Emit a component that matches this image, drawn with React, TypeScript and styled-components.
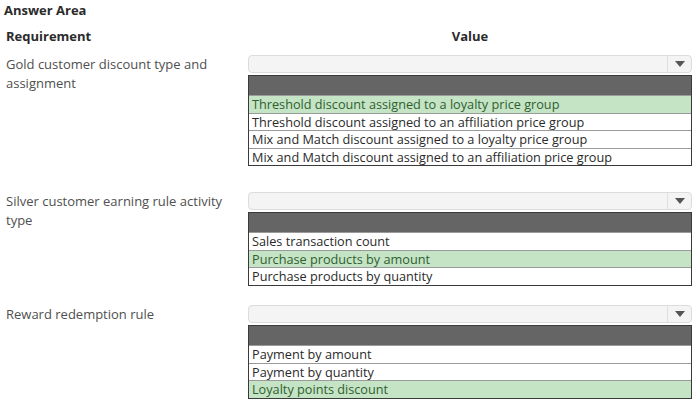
import styled, { createGlobalStyle } from "styled-components";

const GlobalStyle = createGlobalStyle`
  body {
    margin: 0;
    background: #ffffff;
    font-family: "Open Sans", "Liberation Sans", sans-serif;
  }
`;

const Page = styled.div`
  width: 700px;
  height: 408px;
  padding: 1px 0 0 4px;
  box-sizing: border-box;
  overflow: hidden;
`;

const Title = styled.div`
  font-weight: 700;
  font-size: 13px;
  line-height: 18px;
  color: #2b2b2b;
`;

const Grid = styled.div`
  display: grid;
  grid-template-columns: 244px 444px;
  margin-top: 8px;
`;

const HeadCell = styled.div<{ $center?: boolean }>`
  font-weight: 700;
  font-size: 13px;
  line-height: 18px;
  color: #2b2b2b;
  padding-left: ${(p) => (p.$center ? "0" : "2px")};
  text-align: ${(p) => (p.$center ? "center" : "left")};
  margin-bottom: 10px;
`;

const Label = styled.div<{ $gap: number }>`
  font-size: 13px;
  line-height: 19px;
  color: #4f4f4f;
  padding: 0 20px 0 2px;
  margin-bottom: ${(p) => p.$gap}px;
`;

const Field = styled.div<{ $gap: number }>`
  display: flex;
  flex-direction: column;
  margin-bottom: ${(p) => p.$gap}px;
`;

const Select = styled.div`
  height: 16px;
  display: flex;
  justify-content: flex-end;
  border: 1px solid #dcdcdc;
  border-radius: 4px;
  background: #f4f4f4;
`;

const Arrow = styled.div`
  width: 23px;
  display: flex;
  align-items: center;
  justify-content: center;
  border-left: 1px solid #e0e0e0;
`;

const List = styled.div`
  margin-top: 2px;
  border: 1px solid #3a3a3a;
  background: #ffffff;
`;

const ListHead = styled.div`
  height: 19px;
  background: #656565;
`;

const Item = styled.div<{ $selected?: boolean }>`
  height: 16.5px;
  font-size: 12.7px;
  line-height: 16.5px;
  padding-left: 3px;
  color: ${(p) => (p.$selected ? "#2f5f2f" : "#2a2a2a")};
  background: ${(p) => (p.$selected ? "#c5e3c5" : "#ffffff")};
  border-top: 1px solid #9a9a9a;
  white-space: nowrap;
`;

type Question = {
  label: string;
  options: string[];
  selected: number;
  gap: number;
};

const questions: Question[] = [
  {
    label: "Gold customer discount type and assignment",
    options: [
      "Threshold discount assigned to a loyalty price group",
      "Threshold discount assigned to an affiliation price group",
      "Mix and Match discount assigned to a loyalty price group",
      "Mix and Match discount assigned to an affiliation price group",
    ],
    selected: 0,
    gap: 26,
  },
  {
    label: "Silver customer earning rule activity type",
    options: [
      "Sales transaction count",
      "Purchase products by amount",
      "Purchase products by quantity",
    ],
    selected: 1,
    gap: 19.5,
  },
  {
    label: "Reward redemption rule",
    options: [
      "Payment by amount",
      "Payment by quantity",
      "Loyalty points discount",
    ],
    selected: 2,
    gap: 0,
  },
];

const Caret = () => (
  <svg width="10" height="6" viewBox="0 0 10 6">
    <path d="M0 0 L10 0 L5 6 Z" fill="#555555" />
  </svg>
);

export default function App() {
  return (
    <Page>
      <GlobalStyle />
      <Title>Answer Area</Title>
      <Grid>
        <HeadCell>Requirement</HeadCell>
        <HeadCell $center>Value</HeadCell>
        {questions.map((q) => (
          <>
            <Label key={q.label + "-l"} $gap={q.gap}>
              {q.label}
            </Label>
            <Field key={q.label + "-f"} $gap={q.gap}>
              <Select>
                <Arrow>
                  <Caret />
                </Arrow>
              </Select>
              <List>
                <ListHead />
                {q.options.map((o, i) => (
                  <Item key={o} $selected={i === q.selected}>
                    {o}
                  </Item>
                ))}
              </List>
            </Field>
          </>
        ))}
      </Grid>
    </Page>
  );
}
